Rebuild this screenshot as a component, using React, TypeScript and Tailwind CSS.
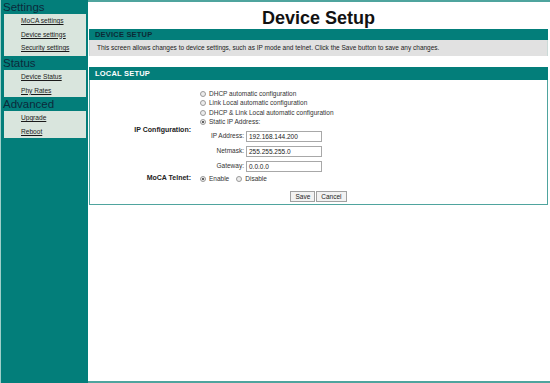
import React from "react";

const Radio = ({ checked }: { checked?: boolean }) => (
  <span className="inline-flex items-center justify-center w-[6px] h-[6px] rounded-full border border-[#9a9a9a] bg-[#ececec] shrink-0">
    {checked ? <span className="w-[2px] h-[2px] rounded-full bg-[#333]" /> : null}
  </span>
);

const SideHead = ({ children }: { children: React.ReactNode }) => (
  <div className="h-[14px] leading-[14px] pl-[2px] text-[11.5px] text-[#0b2a3a]">{children}</div>
);

const SideBox = ({ items, extra }: { items: string[]; extra?: boolean }) => (
  <div className={extra ? "ml-[3px] mr-[2px] bg-[#d9e5dd] pb-[1.5px]" : "ml-[3px] mr-[2px] bg-[#d9e5dd]"}>
    {items.map((t) => (
      <div key={t} className="h-[13.5px] leading-[13.5px] pl-[17px] text-[6.6px] text-[#1a1a1a] underline">
        {t}
      </div>
    ))}
  </div>
);

const Field = ({ label, value }: { label: string; value: string }) => (
  <div className="flex items-center h-[11px]">
    <div className="w-[46px] text-right pr-[2px] text-[6.5px] text-[#333]">{label}</div>
    <div className="w-[76px] h-[11px] border border-[#a8a8a8] bg-white pl-[2px] text-[6.5px] leading-[9px] text-[#222]">
      {value}
    </div>
  </div>
);

export default function App() {
  return (
    <div className="flex w-[550px] h-[383px] bg-white font-['Liberation_Sans',Arial,sans-serif] overflow-hidden">
      <aside className="w-[88px] h-full bg-[#037e7a] border-l border-[#9fcfc9] shrink-0">
        <SideHead>Settings</SideHead>
        <SideBox items={["MoCA settings", "Device settings", "Security settings"]} extra />
        <SideHead>Status</SideHead>
        <SideBox items={["Device Status", "Phy Rates"]} />
        <SideHead>Advanced</SideHead>
        <SideBox items={["Upgrade", "Reboot"]} />
      </aside>
      <main className="flex-1 h-full border-t-2 border-b-2 border-[#4fa49e] pl-[1px] pr-[2px]">
        <div className="h-[27px] pt-[4px] flex items-center justify-center text-[18px] leading-[20px] font-bold text-[#111]">
          Device Setup
        </div>
        <div className="h-[11px] leading-[11px] bg-[#037e7a] pl-[6px] text-[7.5px] font-bold text-[#0b2a35] tracking-[0.2px]">
          DEVICE SETUP
        </div>
        <div className="h-[16px] leading-[16px] bg-[#e1e1e1] pl-[7px] text-[6.5px] text-[#222] border-x border-[#c9d9d6]">
          This screen allows changes to device settings, such as IP mode and telnet. Click the Save button to save any changes.
        </div>
        <div className="mt-[11px] h-[13px] leading-[13px] bg-[#037e7a] pl-[6px] text-[7.5px] font-bold text-white tracking-[0.2px]">
          LOCAL SETUP
        </div>
        <div className="border-x border-b border-[#4fa49e] pt-[9px] pb-[2px]">
          <div className="flex">
            <div className="w-[101px] flex items-center justify-end text-[7px] font-bold text-[#222]">
              IP Configuration:
            </div>
            <div className="pl-[9px]">
              {[
                ["DHCP automatic configuration", false],
                ["Link Local automatic configuration", false],
                ["DHCP & Link Local automatic configuration", false],
                ["Static IP Address:", true],
              ].map(([t, c]) => (
                <div key={t as string} className="flex items-center h-[9.5px] gap-[3px] text-[6.5px] text-[#333]">
                  <Radio checked={c as boolean} />
                  <span>{t as string}</span>
                </div>
              ))}
              <div className="mt-[3.5px] flex flex-col gap-[4px]">
                <Field label="IP Address:" value="192.168.144.200" />
                <Field label="Netmask:" value="255.255.255.0" />
                <Field label="Gateway:" value="0.0.0.0" />
              </div>
            </div>
          </div>
          <div className="flex mt-[2px] h-[10px] items-center">
            <div className="w-[101px] text-right text-[7px] font-bold text-[#222]">MoCA Telnet:</div>
            <div className="pl-[9px] flex items-center gap-[3px] text-[6.5px] text-[#333]">
              <Radio checked />
              <span>Enable</span>
              <span className="ml-[1px]" />
              <Radio />
              <span>Disable</span>
            </div>
          </div>
          <div className="mt-[7px] flex justify-center">
            <div className="h-[11px] px-[4px] border border-[#a0a0a0] bg-[#f2f2f2] text-[6.5px] leading-[9px] text-[#222]">
              Save
            </div>
            <div className="ml-[1px] h-[11px] px-[4px] border border-[#a0a0a0] bg-[#f2f2f2] text-[6.5px] leading-[9px] text-[#222]">
              Cancel
            </div>
          </div>
        </div>
      </main>
    </div>
  );
}
